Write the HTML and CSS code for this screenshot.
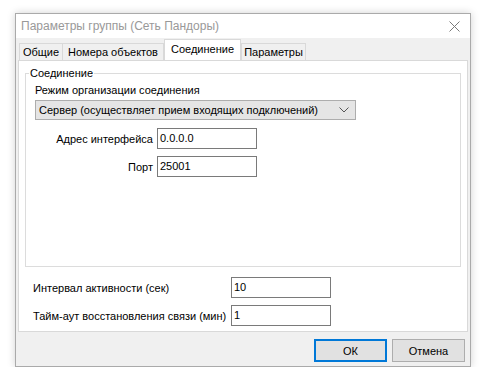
FILE: index.html
```html
<!DOCTYPE html>
<html lang="ru">
<head>
    <meta charset="UTF-8">
    <title>Параметры группы</title>
    <link rel="stylesheet" href="styles.css">
</head>
<body>
<div class="window">
    <div class="titlebar">
        <span class="title">Параметры группы (Сеть Пандоры)</span>
        <svg class="close" width="11" height="11" viewBox="0 0 11 11"><path d="M0.5 0.5L10.5 10.5M10.5 0.5L0.5 10.5" stroke="#7a7a7a" stroke-width="1"/></svg>
    </div>
    <div class="client">
        <div class="tabs">
            <span class="tab t1">Общие</span>
            <span class="tab t2">Номера объектов</span>
            <span class="tab t3 active">Соединение</span>
            <span class="tab t4">Параметры</span>
        </div>
        <div class="panel">
            <fieldset class="group">
                <legend>Соединение</legend>
                <div class="caption">Режим организации соединения</div>
                <div class="combo">
                    <span>Сервер (осуществляет прием входящих подключений)</span>
                    <svg width="10" height="6" viewBox="0 0 10 6"><path d="M0.5 0.5L5 5L9.5 0.5" fill="none" stroke="#555" stroke-width="1"/></svg>
                </div>
                <div class="fields">
                    <label>Адрес интерфейса</label><div class="edit">0.0.0.0</div>
                    <label>Порт</label><div class="edit">25001</div>
                </div>
            </fieldset>
            <div class="extra">
                <label>Интервал активности (сек)</label><div class="edit">10</div>
                <label>Тайм-аут восстановления связи (мин)</label><div class="edit">1</div>
            </div>
        </div>
        <div class="footer">
            <button class="btn default">ОК</button>
            <button class="btn">Отмена</button>
        </div>
    </div>
</div>
</body>
</html>
```

FILE: styles.css
```css
body{margin:0;background:#fff;font-family:"Liberation Sans",Arial,sans-serif;font-size:11px;color:#000;}
.window{margin:13px 0 0 15px;width:454px;border:1px solid #aaa;box-shadow:0 0 8px rgba(0,0,0,0.18);}
.titlebar{height:24px;background:#fff;display:flex;align-items:center;justify-content:space-between;padding:0 10px 0 5px;}
.title{color:#999;font-size:12px;}
.close{margin-top:1px;}
.client{background:#f0f0f0;}
.tabs{display:flex;align-items:flex-end;padding:1px 0 0 3px;height:21px;}
.tab{height:17px;line-height:17px;border:1px solid #d9d9d9;border-bottom:none;background:#f0f0f0;margin-right:-1px;white-space:nowrap;text-align:center;box-sizing:border-box;}
.t1{width:44px;}
.t2{width:102px;}
.t3{width:77px;}
.t4{width:65px;}
.tab.active{height:21px;line-height:19px;background:#fff;position:relative;z-index:1;margin:0 0 0 1px;}
.panel{margin:0 2px 0 2px;background:#fff;border:1px solid #d9d9d9;height:272px;box-sizing:border-box;padding:6px 6px 0 6px;}
.group{margin:0;border:1px solid #dcdcdc;padding:0 0 0 9px;height:200px;box-sizing:border-box;}
.group legend{padding:0 1px;margin-left:-6px;}
.caption{margin-top:5px;height:15px;}
.combo{width:316px;height:18px;border:1px solid #adadad;background:#e5e5e5;display:flex;align-items:center;justify-content:space-between;padding:0 0 0 3px;margin-top:1px;box-sizing:content-box;}
.combo svg{margin-right:6px;}
.combo span{white-space:nowrap;}
.fields{display:grid;grid-template-columns:118px 100px;column-gap:4px;row-gap:7px;margin-top:8px;align-items:center;}
.fields label{text-align:right;white-space:nowrap;}
.edit{height:19px;line-height:19px;border:1px solid #7a7a7a;padding:0 2px;background:#fff;}
.extra{display:grid;grid-template-columns:198px 100px;row-gap:7px;margin:10px 0 0 8px;align-items:center;}
.extra label{white-space:nowrap;}
.footer{height:34px;display:flex;justify-content:flex-end;align-items:center;padding-right:5px;gap:5px;}
.btn{width:73px;height:23px;font:inherit;border:1px solid #adadad;background:#e1e1e1;padding:0;margin-top:3px;}
.btn.default{border:2px solid #0078d7;}
```
